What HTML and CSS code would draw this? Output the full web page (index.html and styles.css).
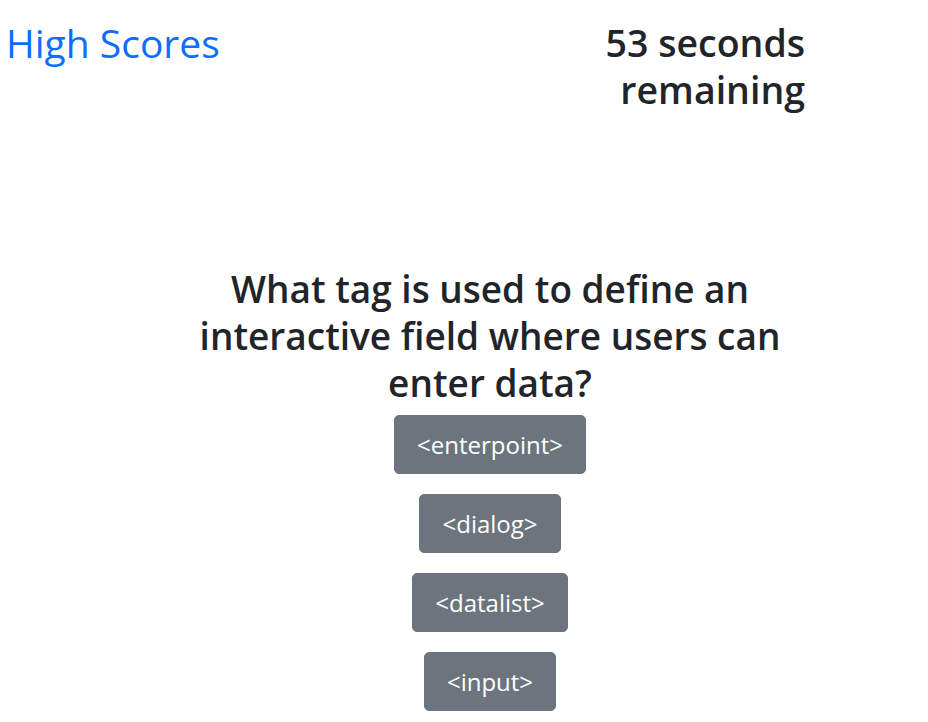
FILE: index.html
```html
<!DOCTYPE html>
<html lang="en">
<head>
<meta charset="utf-8">
<title>Code Quiz</title>
<link rel="stylesheet" href="styles.css">
</head>
<body>
<header class="top-bar">
  <a class="high-scores" href="#">High Scores</a>
  <div class="timer">53 seconds remaining</div>
</header>
<main class="quiz">
  <h1 class="question">What tag is used to define an interactive field where users can enter data?</h1>
  <div class="answers">
    <button class="answer">&lt;enterpoint&gt;</button>
    <button class="answer">&lt;dialog&gt;</button>
    <button class="answer">&lt;datalist&gt;</button>
    <button class="answer">&lt;input&gt;</button>
  </div>
</main>
</body>
</html>
```
FILE: styles.css
```css
html, body {
  margin: 0;
  padding: 0;
  background: #fff;
}
body {
  font-family: "Open Sans", "Noto Sans", sans-serif;
  color: #212529;
}
.top-bar {
  display: flex;
  justify-content: space-between;
  align-items: flex-start;
  padding: 19px 123px 0 6px;
}
.high-scores {
  font-size: 39px;
  line-height: 47px;
  color: #0d6efd;
  text-decoration: none;
  font-weight: 400;
}
.timer {
  width: 240px;
  text-align: right;
  font-size: 37.5px;
  line-height: 47px;
  font-weight: 600;
}
.quiz {
  display: flex;
  flex-direction: column;
  align-items: center;
  padding-left: 52px;
  margin-top: 152px;
}
.question {
  max-width: 600px;
  margin: 0;
  text-align: center;
  font-size: 37px;
  line-height: 47px;
  font-weight: 600;
}
.answers {
  display: flex;
  flex-direction: column;
  align-items: center;
  gap: 20px;
  margin-top: 9px;
}
.answer {
  font-family: inherit;
  font-size: 24px;
  line-height: 37px;
  color: #fff;
  background: #6c757d;
  border: 1px solid #6c757d;
  border-radius: 5px;
  padding: 10px 22px;
  cursor: pointer;
}
```
